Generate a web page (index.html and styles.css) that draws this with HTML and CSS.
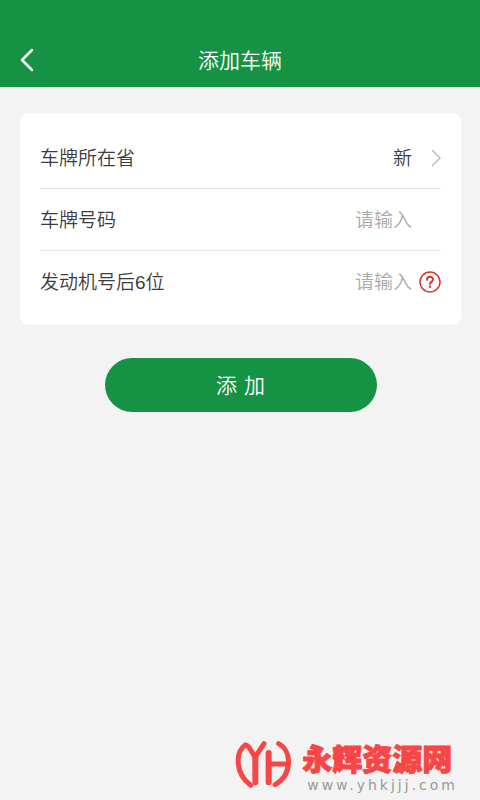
FILE: index.html
```html
<!DOCTYPE html>
<html lang="zh-CN">
<head>
<meta charset="utf-8">
<meta name="viewport" content="width=device-width, initial-scale=1">
<title>添加车辆</title>
<link rel="stylesheet" href="styles.css">
</head>
<body>
<header class="bar">
  <button class="back" type="button" aria-label="返回">
    <svg width="14" height="24" viewBox="0 0 14 24"><path d="M12 2 2 12 12 22"/></svg>
  </button>
  <h1 class="title">添加车辆</h1>
</header>
<main class="page">
  <form class="form">
    <div class="card">
      <div class="row">
        <label class="label" for="province">车牌所在省</label>
        <select class="field" id="province"><option>新</option></select>
        <span class="trail">
          <svg class="chevron" width="10" height="18" viewBox="0 0 10 18"><path d="M1.500 1.500 9 9 1.500 16.500"/></svg>
        </span>
      </div>
      <div class="row">
        <label class="label" for="plate">车牌号码</label>
        <input class="field" id="plate" type="text" placeholder="请输入">
        <span class="trail"></span>
      </div>
      <div class="row">
        <label class="label" for="engine">发动机号后6位</label>
        <input class="field" id="engine" type="text" placeholder="请输入">
        <button class="trail help" type="button" aria-label="帮助">
          <svg width="22" height="22" viewBox="0 0 22 22"><circle cx="11" cy="11" r="10"/><path class="mark" d="M8 8.800C8 4.900 14 4.900 14 8.600 14 10.800 11 10.900 11 13M11 15.500v.6"/></svg>
        </button>
      </div>
    </div>
    <button class="submit" type="button">添&#8196;加</button>
  </form>
</main>
<footer class="brand">
  <svg class="logo" width="56" height="50" viewBox="12 12 168 150"><path d="M43 30C12 52 12 115 59 151M43 30C54 30 61 50 73 68M99 26 73 66"/><path class="stem" d="M73 66V142M113 54V142"/><path d="M113 87H168M143 26C186 50 182 122 132 149"/></svg>
  <div class="brand-text">
    <span class="brand-name">永辉资源网</span>
    <span class="brand-url">www.yhkjjj.com</span>
  </div>
</footer>
</body>
</html>
```
FILE: styles.css
```css
* { box-sizing: border-box; }

body {
  margin: 0;
  min-height: 100vh;
  display: flex;
  flex-direction: column;
  background: #f3f3f3;
  color: #3c3c3c;
  font-family: "Liberation Sans", "Noto Sans CJK SC", sans-serif;
  font-size: 19px;
  font-weight: 350;
}

button, input, select {
  margin: 0;
  padding: 0;
  border: 0;
  background: none;
  color: inherit;
  font: inherit;
}

svg {
  display: block;
  fill: none;
  stroke-linecap: round;
  stroke-linejoin: round;
}

.bar {
  display: grid;
  grid-template-columns: 40px 1fr 40px;
  align-items: center;
  padding: 33px 0 0;
  height: 87px;
  background: #159243;
  color: #fff;
}

.back { padding-left: 20px; }
.back svg { stroke: #fff; stroke-width: 2.5; }

.title {
  margin: 0;
  font-size: 21px;
  font-weight: 350;
  line-height: 24px;
  padding-top: 2px;
  text-align: center;
}

.page { flex: 1; padding: 26px 19px 26px 20px; }

.card {
  padding: 14px 20px 13px;
  border-radius: 8px;
  background: #fff;
}

.row {
  display: flex;
  align-items: center;
  height: 62px;
  border-bottom: 1px solid #e6e6e6;
}
.row:last-child { height: 61px; border-bottom: 0; }

.label {
  flex: none;
  height: 40px;
  line-height: 42px;
}

.field {
  flex: 1;
  min-width: 0;
  height: 40px;
  padding-top: 2px;
  appearance: none;
  text-align: right;
  text-align-last: right;
  outline: 0;
}
.field::placeholder { color: #aaa; opacity: 1; }

.trail {
  flex: none;
  display: flex;
  justify-content: flex-end;
  width: 29px;
}
.chevron { stroke: #b9bec3; stroke-width: 1.5; }
.help svg { stroke: #d43535; stroke-width: 1.5; }
.help .mark { stroke-width: 2; }

.submit {
  display: block;
  width: 272px;
  height: 54px;
  margin: 33px auto 0;
  padding-bottom: 2px;
  border-radius: 27px;
  background: #159243;
  color: #fff;
  font-size: 21px;
}

.brand {
  display: flex;
  justify-content: flex-end;
  gap: 11px;
  padding: 0 22px 7px;
}
.logo { stroke: #f84545; stroke-width: 15; }
.logo .stem { stroke-width: 18; }

.brand-text { display: flex; flex-direction: column; }

.brand-name {
  padding-top: 4px;
  color: #f84545;
  font-size: 30px;
  font-weight: 900;
  line-height: 34px;
  -webkit-text-stroke: 1px #f84545;
}

.brand-url {
  padding-left: 5px;
  color: #999;
  font-family: "DejaVu Sans", sans-serif;
  font-size: 14px;
  font-weight: 400;
  letter-spacing: 3px;
  line-height: 16px;
}
```
